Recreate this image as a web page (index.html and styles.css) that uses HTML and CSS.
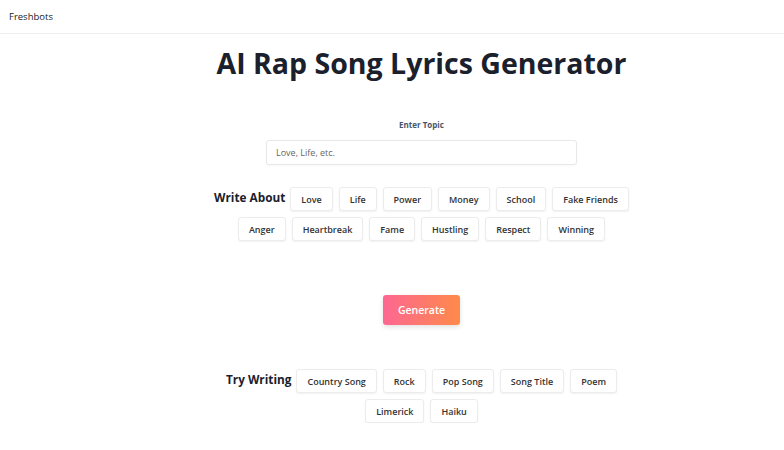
FILE: index.html
```html
<!DOCTYPE html>
<html>
<head>
<meta charset="utf-8">
<link rel="stylesheet" href="styles.css">
</head>
<body>
<header class="topbar"><span class="brand">Freshbots</span></header>
<main class="main">
  <h1 class="title">AI Rap Song Lyrics Generator</h1>
  <label class="field-label" for="topic">Enter Topic</label>
  <input id="topic" class="topic-input" type="text" placeholder="Love, Life, etc.">
  <div class="chip-group">
    <span class="group-label">Write About</span>
    <button class="chip">Love</button>
    <button class="chip">Life</button>
    <button class="chip">Power</button>
    <button class="chip">Money</button>
    <button class="chip">School</button>
    <button class="chip">Fake Friends</button>
    <button class="chip">Anger</button>
    <button class="chip">Heartbreak</button>
    <button class="chip">Fame</button>
    <button class="chip">Hustling</button>
    <button class="chip">Respect</button>
    <button class="chip">Winning</button>
  </div>
  <button class="generate">Generate</button>
  <div class="chip-group try">
    <span class="group-label">Try Writing</span>
    <button class="chip">Country Song</button>
    <button class="chip">Rock</button>
    <button class="chip">Pop Song</button>
    <button class="chip">Song Title</button>
    <button class="chip">Poem</button>
    <button class="chip">Limerick</button>
    <button class="chip">Haiku</button>
  </div>
</main>
</body>
</html>
```
FILE: styles.css
```css
* { box-sizing: border-box; }
html, body { margin: 0; padding: 0; background: #fff; }
body { font-family: "Open Sans", "Noto Sans", sans-serif; color: #1a202c; }

.topbar {
  height: 34px;
  border-bottom: 1px solid #ededed;
  display: flex;
  align-items: center;
  padding-left: 9px;
}
.brand { font-size: 9.5px; color: #222; }

.main {
  margin-left: 59px;
  display: flex;
  flex-direction: column;
  align-items: center;
}
.title {
  margin: 11px 0 0;
  font-size: 28.5px;
  font-weight: 700;
  color: #1a202c;
  line-height: 36px;
}
.field-label {
  margin-top: 38px;
  font-size: 8px;
  font-weight: 700;
  color: #4a5568;
  line-height: 12px;
}
.topic-input {
  margin-top: 9px;
  width: 311px;
  height: 25px;
  border: 1px solid #e8e8e8;
  border-radius: 3px;
  padding: 0 9px;
  font-family: inherit;
  font-size: 9px;
  color: #333;
  outline: none;
  box-shadow: 0 1px 2px rgba(0,0,0,0.03);
}
.topic-input::placeholder { color: #666; }

.chip-group {
  margin-top: 22px;
  width: 440px;
  display: flex;
  flex-wrap: wrap;
  justify-content: center;
  align-items: center;
  gap: 6px;
}
.group-label {
  font-size: 11.8px;
  font-weight: 700;
  color: #1a202c;
  margin-top: -4px;
  margin-right: -1px;
}
.chip {
  height: 24px;
  padding: 0 10px;
  background: #fff;
  border: 1px solid #ececec;
  border-radius: 3px;
  box-shadow: 0 1px 2px rgba(0,0,0,0.06);
  font-family: inherit;
  font-size: 9px;
  font-weight: 600;
  color: #333;
  cursor: pointer;
}
.generate {
  margin-top: 54px;
  width: 77px;
  height: 30px;
  border: none;
  border-radius: 3px;
  background: linear-gradient(90deg, #fd6792, #fe8a4a);
  box-shadow: 0 2px 5px rgba(0,0,0,0.12);
  color: #fff;
  font-family: inherit;
  font-size: 10.5px;
  font-weight: 600;
  cursor: pointer;
}
.chip-group.try { margin-top: 44px; }
```
